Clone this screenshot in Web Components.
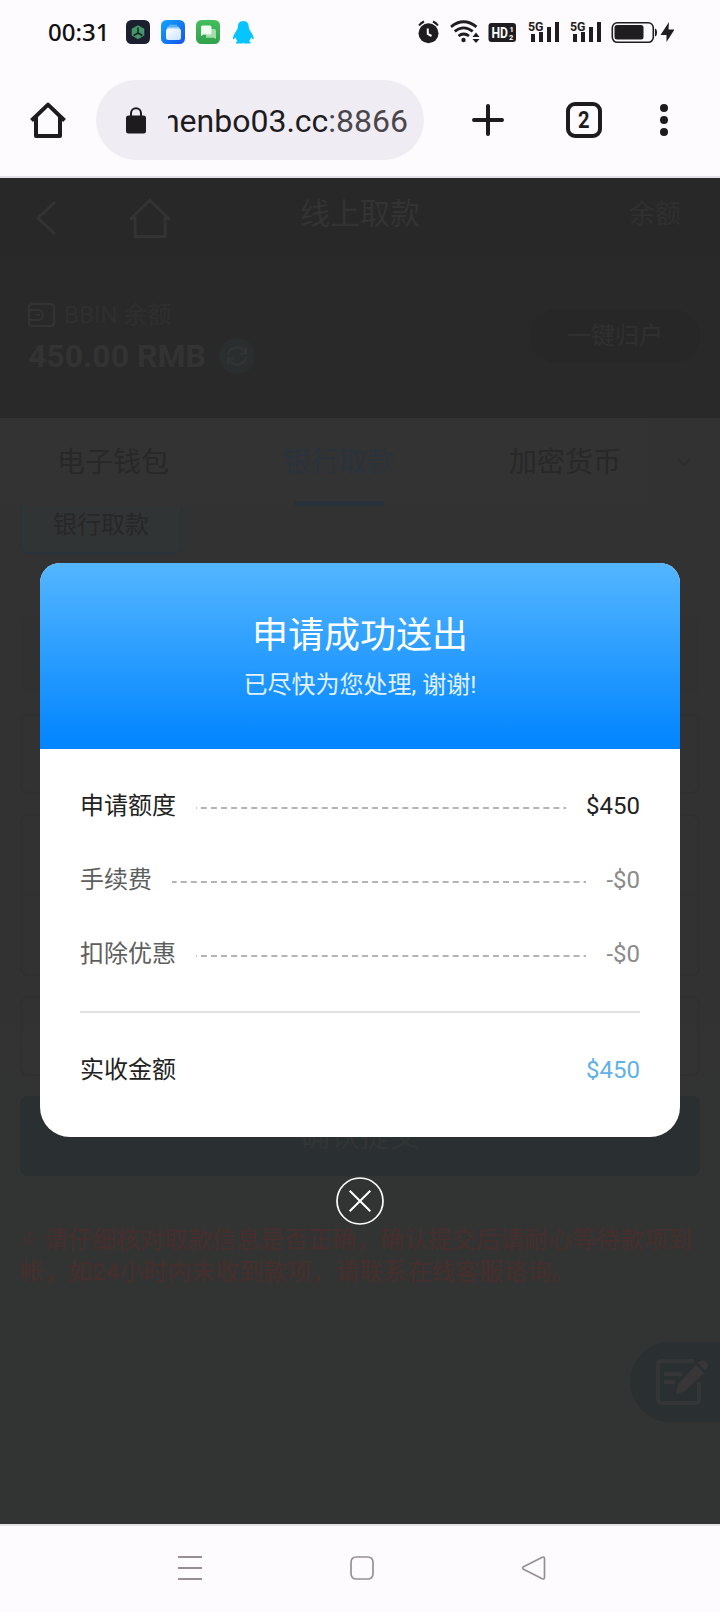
<!DOCTYPE html>
<html lang="zh-CN">
<head>
<meta charset="utf-8">
<meta name="viewport" content="width=device-width">
<title>线上取款</title>
<style>
html,body{margin:0;padding:0}
body{width:720px;height:1612px;overflow:hidden;background:#fefbff;font-family:Roboto,"Noto Sans CJK SC",sans-serif;line-height:1}
</style>
</head>
<body>
<phone-screen></phone-screen>
<script>
function define(name, html) {
  const t = document.createElement('template');
  t.innerHTML = html;
  customElements.define(name, class extends HTMLElement {
    constructor() {
      super();
      this.attachShadow({mode: 'open'}).append(t.content.cloneNode(true));
    }
  });
}

define('status-bar', `
<style>
:host{display:flex;height:64px;align-items:center;box-sizing:border-box;padding:0 46px 0 48px;color:#1f1d20}
.time{font:500 24px/24px "Noto Sans",sans-serif;color:#111;width:78px;white-space:nowrap}
svg{display:block;flex:none}
.apps{display:flex;gap:11px;flex:1}
text{font-family:Roboto,sans-serif;font-weight:700}
</style>
<span class="time">00:31</span>
<div class="apps">
<svg width="24" height="24" viewBox="0 0 24 24"><rect width="24" height="24" rx="5.5" fill="#1c1f30"/><path d="M12 5.2l6.3 3.5v6.8L12 19.2l-6.3-3.7V8.700z" fill="#469566"/><path d="M12 7.500v5.500M12 13l-4.300 2.500M12 13l4.300 2.500" stroke="#14242a" stroke-width="1.500" fill="none"/></svg>
<svg width="24" height="24" viewBox="0 0 24 24"><defs><linearGradient id="b" x1="0" y1="0" x2="1" y2="1"><stop stop-color="#11a4ff"/><stop offset="1" stop-color="#1853ea"/></linearGradient><linearGradient id="w" x1="0" y1="0" x2="1" y2="1"><stop stop-color="#fff"/><stop offset="1" stop-color="#c9e2ff"/></linearGradient></defs><rect width="24" height="24" rx="5.500" fill="url(#b)"/><path d="M8 5.300h8" stroke="#7cc2ff" stroke-width="1"/><rect x="6" y="6.500" width="12.500" height="5" rx="1.500" fill="#8fcbff"/><rect x="5" y="8.500" width="15" height="11.500" rx="2.500" fill="url(#w)"/></svg>
<svg width="24" height="24" viewBox="0 0 24 24"><defs><linearGradient id="g" x1="0" y1="0" x2="0" y2="1"><stop stop-color="#43bf5b"/><stop offset="1" stop-color="#32a04c"/></linearGradient></defs><rect width="24" height="24" rx="5.500" fill="url(#g)"/><path d="M10 9h8.500q1.500 0 1.500 1.500V19l-2-1.200h-8z" fill="#a2dcac"/><path d="M6.500 5.500h7.500q1.500 0 1.500 1.500v6q0 1.500-1.500 1.500H7.500L5 16V7q0-1.500 1.500-1.500z" fill="#f0fbf1"/></svg>
<svg width="24" height="24" viewBox="0 0 24 24"><path d="M12.300 1C8 1 6.800 4 6.800 7.200c0 2.800-3.800 5.800-4.800 10.300-.300 1.700.300 2.400 1.500 1.100l1.100-1.300c.300 1.700.900 2.900 1.900 3.900-1.700.5-1.800 1.200-1.500 2.300h6l1.300-.5 1.300.5h6c.300-1.100.2-1.800-1.500-2.300 1-1 1.600-2.200 1.900-3.900l1.100 1.300c1.200 1.300 1.800.6 1.500-1.100-1-4.500-4.800-7.500-4.800-10.300C17.800 4 16.600 1 12.300 1z" fill="#06c4fd"/></svg>
</div>
<svg width="256" height="26" viewBox="418.500 19 256 26" fill="#1f1d20">
<g><circle cx="429" cy="33.300" r="10"/><path d="M419.500 25.500q2-2.500 5-4M438.500 25.500q-2-2.500-5-4" stroke="#1f1d20" stroke-width="2" fill="none"/><path d="M428.300 28.500v5.500l3.700 2" stroke="#fff" stroke-width="2" fill="none"/></g>
<g fill="none" stroke="#1f1d20" stroke-width="2.800"><path d="M451.500 26.800q12.500-10 25.500 0M455.200 31.400q9-7 18 0M459 36q5.200-4 10.500 0"/></g><circle cx="464" cy="40" r="2.200"/><path d="M473 37l3.500-4.500 3.500 4.500zM473 39h7l-3.500 4z"/>
<rect x="489" y="23" width="27.500" height="19" rx="3"/><g fill="#fff"><text x="492" y="38" font-size="15" textLength="16.500" lengthAdjust="spacingAndGlyphs">HD</text><text x="510" y="31.500" font-size="7.500">1</text><text x="509.500" y="40.300" font-size="7.500">2</text></g>
<g id="s"><text x="528.500" y="30.500" font-size="13" textLength="15.500" lengthAdjust="spacingAndGlyphs">5G</text><path d="M531.500 34h4v8h-4zM539.500 32h4v10h-4zM547.500 27h4v15h-4zM555.500 22h4v20h-4z"/></g>
<use href="#s" x="42"/>
<rect x="612.800" y="22.800" width="41" height="19.500" rx="5" fill="none" stroke="#1f1d20" stroke-width="1.600"/><rect x="615" y="25" width="29" height="14.500" rx="2.500"/><path d="M655.500 28.500q2 .5 2 4t-2 4z"/>
<path d="M669.500 22l-8.500 13h6v7l8-12.500h-6z"/>
</svg>`);

define('browser-bar', `
<style>
:host{display:flex;height:114px;box-sizing:border-box;padding:16px 0 16px 30px;align-items:center;border-bottom:2px solid #e4e0e7;color:#1d1b1e}
svg{display:block;flex:none}
.url{display:flex;align-items:center;width:328px;height:80px;box-sizing:border-box;margin:0 48px 0 30px;padding:0 16px 0 30px;border-radius:40px;background:#f0ecf3}
.addr{flex:1;margin:2px 0 0 22px;overflow:hidden;display:flex;justify-content:flex-end;font-size:32px;line-height:44px;white-space:nowrap}
.port{color:#49464b}
.count{display:flex;align-items:center;justify-content:center;box-sizing:border-box;width:36px;height:36px;margin:0 58px 0 62px;border:4px solid #1d1b1e;border-radius:9px;font:700 24px/28px Roboto,sans-serif}
.count span{transform:scaleX(.84)}
</style>
<svg width="36" height="36" viewBox="0 0 36 36" fill="none" stroke="#1d1b1e" stroke-width="4"><path d="M1.500 18.500L18 2.600l16.500 15.900M6 15v19h24V15" stroke-linejoin="round"/></svg>
<div class="url"><svg width="20" height="27" viewBox="0 0 20 27"><rect y="8.500" width="20" height="18" rx="2.500" fill="#1d1b1e"/><path d="M5 9.500V6.300a5 5 0 0 1 10 0v3.200" fill="none" stroke="#1d1b1e" stroke-width="2"/></svg><div class="addr"><span>henbo03.cc<span class="port">:8866</span></span></div></div>
<svg width="32" height="32" viewBox="0 0 32 32" stroke="#1d1b1e" stroke-width="4" stroke-linecap="round"><path d="M16 2v28M2 16h28"/></svg>
<div class="count"><span>2</span></div>
<svg width="8" height="32" viewBox="0 0 8 32" fill="#1d1b1e"><circle cx="4" cy="4" r="4"/><circle cx="4" cy="16" r="4"/><circle cx="4" cy="28" r="4"/></svg>`);

define('page-header', `
<style>
:host{display:block;background:#292929;color:#333;height:240px}
.bar{display:grid;grid-template-columns:240px 1fr 240px;height:76px;align-items:center;background:#282828}
.left{display:flex;align-items:center;padding:3px 0 0 36px;gap:72px}
.t{text-align:center;font-size:30px;line-height:40px;margin-top:-4px}
.r{text-align:right;padding-right:39px;font-size:26px;line-height:40px;margin-top:-4px;color:#303030}
.bal{display:flex;justify-content:space-between;align-items:center;height:164px;box-sizing:border-box;padding:0 20px 0 28px}
.name{display:flex;gap:9px;align-items:center;font-size:24px;line-height:34px;color:#2f2f2f}
.sum{display:flex;gap:13px;align-items:center;font-size:32px;font-weight:700;line-height:36px;margin-top:6px}
.btn{width:170px;height:52px;border-radius:26px;background:#272727;text-align:center;font-size:24px;line-height:53px;color:#303030}
svg{display:block}
</style>
<div class="bar"><div class="left"><svg width="22" height="36" viewBox="36 199 22 36" fill="none" stroke="#333" stroke-width="3"><path d="M55 201L38 217l17 16"/></svg>
<svg width="40" height="40" viewBox="130 197 40 40" fill="none" stroke="#333" stroke-width="3"><path d="M131 217.500l18.800-18.300 18.800 18.300h-3.500v18h-30v-18z"/></svg></div><div class="t">线上取款</div><div class="r">余额</div></div>
<div class="bal"><div><div class="name"><svg width="27" height="24" viewBox="0 0 27 24" fill="none" stroke="#333" stroke-width="2"><rect x="1" y="1" width="25" height="22" rx="3"/><path d="M1 7h9a5 5 0 0 1 0 10H1M8 12h4"/></svg><span>BBIN 余额</span></div>
<div class="sum"><span>450.00 RMB</span><svg width="36" height="36" viewBox="0 0 36 36"><circle cx="18" cy="18" r="18" fill="#2b2e2e"/><path d="M9 17a9 9 0 0 1 16-4l1.500 2M27 10v5.500h-5.500M27 19a9 9 0 0 1-16 4l-1.500-2M9 26v-5.500h5.500" fill="none" stroke="#333535" stroke-width="2"/></svg></div></div>
<div class="btn">一键归户</div></div>`);

define('method-tabs', `
<style>
:host{display:flex;position:relative;height:88px;background:#333;font-size:28px;color:#282828;overflow:hidden}
.tab{flex:none;width:226px;height:88px;display:flex;flex-direction:column;align-items:center;justify-content:space-between}
.tab span{height:83px;line-height:89px}
.on{color:#2a333d}
i{display:block;width:90px;height:5px;background:#29323a;border-radius:2px 2px 0 0}
.more{position:absolute;right:0;top:0;width:72px;height:88px;background:#323232;display:flex;align-items:center;justify-content:center}
</style>
<div class="tab"><span>电子钱包</span></div><div class="tab on"><span>银行取款</span><i></i></div><div class="tab"><span>加密货币</span></div>
<div class="more"><svg width="16" height="10" viewBox="0 0 16 10" fill="none" stroke="#2c2c2c" stroke-width="2"><path d="M2 2l6 6 6-6"/></svg></div>`);

define('withdraw-form', `
<style>
:host{display:flex;flex-direction:column;padding:0 20px;color:#2a2a2a}
.chip{box-sizing:border-box;width:162px;height:48px;border:2px solid #2a333a;border-top:0;border-radius:0 0 8px 8px;background:#313434;text-align:center;font-size:24px;line-height:39px;margin-bottom:60px;color:#272727}
.box{box-sizing:border-box;height:80px;border:2px solid #303030;border-radius:8px;margin-bottom:20px}
.fill{border-color:#323232;background:#313131}
.two{height:162px}.two:before{content:"";display:block;height:78px;border-bottom:1px solid #303030}
.submit{height:80px;border-radius:8px;background:#2a2f32;text-align:center;font-size:30px;line-height:80px;color:#323535}
.note{margin:48px 0 0;font-size:24px;font-weight:500;line-height:32px;color:#452f2e;white-space:nowrap}
.note div{height:32px;display:flex}
.mark{width:24px;font-size:18px;font-weight:700}
</style>
<div class="chip">银行取款</div>
<div class="box fill"></div><div class="box"></div><div class="box two"></div><div class="box"></div>
<div class="submit">确认提交</div>
<div class="note"><div><span class="mark">※</span><span>请仔细核对取款信息是否正确，确认提交后请耐心等待款项到</span></div><div>帐，如24小时内未收到款项，请联系在线客服谘询。</div></div>`);

define('feedback-button', `
<style>
:host{display:flex;align-items:center;box-sizing:border-box;padding-left:25px;width:90px;height:80px;border-radius:40px 0 0 40px;background:#2a2f32}
</style>
<svg width="54" height="48" viewBox="0 0 54 48"><path d="M39 3H7Q3 3 3 7v34q0 4 4 4h33q4 0 4-4V24" fill="none" stroke="#343536" stroke-width="4"/><path d="M9 16h18M9 24h11" stroke="#343638" stroke-width="4"/><path d="M21 37l2-11L41 7l8 8-19 18z" fill="#383636"/><path d="M43 5l2-2q3-2 6 1t1 6l-2 2z" fill="#383636"/></svg>`);

define('detail-row', `
<style>
:host{display:grid;grid-template:34px / 1fr;align-items:center;height:74px;box-sizing:border-box;padding:20px 0;font-size:24px;line-height:34px}
.line{grid-area:1/1;border-top:2px dashed #b4b4b4;margin-top:3px}
.c{grid-area:1/1;display:flex;justify-content:space-between;z-index:1}
.k,.v{background:#fff}
.k{padding-right:20px;color:var(--k,#5e5e5e)}
.v{padding-left:20px;color:var(--v,#8b8b8b)}
:host([plain]) .line{display:none}
</style>
<div class="line"></div><div class="c"><span class="k"><slot name="label"></slot></span><span class="v"><slot></slot></span></div>`);

define('result-dialog', `
<style>
:host{display:flex;flex-direction:column;align-items:center}
.card{width:640px;height:574px;border-radius:20px 20px 30px 30px;overflow:hidden;background:#fff}
header{height:186px;box-sizing:border-box;padding-top:48px;background:linear-gradient(#54b6ff,#0084ff);text-align:center;color:#fff}
h1{margin:0;font-size:36px;font-weight:400;line-height:50px}
p{margin:7px 0 0;font-size:24px;line-height:34px;color:#e0f2ff}
.rows{padding:20px 40px 0}
hr{margin:20px 0;border:0;border-top:2px solid #e0e0e0}
.strong{--k:#222;--v:#222}
.total{--k:#222;--v:#5fb1e8}
.x{display:block;margin-top:40px}
</style>
<div class="card"><header><h1>申请成功送出</h1><p>已尽快为您处理, 谢谢!</p></header>
<div class="rows">
<detail-row class="strong"><span slot="label">申请额度</span>$450</detail-row>
<detail-row><span slot="label">手续费</span>-$0</detail-row>
<detail-row><span slot="label">扣除优惠</span>-$0</detail-row>
<hr>
<detail-row class="total" plain><span slot="label">实收金额</span>$450</detail-row>
</div></div>
<svg class="x" width="48" height="48" viewBox="0 0 48 48" fill="none" stroke="#fff"><circle cx="24" cy="24" r="23" stroke-width="1.700"/><path d="M13.700 13.700l20.600 20.600M34.300 13.700L13.700 34.300" stroke-width="2"/></svg>`);

define('nav-bar', `
<style>
:host{display:flex;height:86px;align-items:center;justify-content:center;gap:148px;padding:0 0 2px 4px;box-sizing:border-box}
</style>
<svg width="24" height="24" stroke="#978f95" stroke-width="2"><path d="M0 1h24M0 12h24M0 23h24"/></svg>
<svg width="24" height="24" stroke="#978f95" stroke-width="1.700" fill="none"><rect x="1" y="1" width="22" height="22" rx="5"/></svg>
<svg width="24" height="24" stroke="#978f95" stroke-width="1.700" fill="none"><path d="M1.500 10.700L20.300 1.200q2.200-.8 2.200 1.500v18.600q0 2.300-2.200 1.500L1.500 13.300q-1.600-1.300 0-2.600z"/></svg>`);

define('phone-screen', `
<style>
:host{display:flex;flex-direction:column;width:720px;height:1612px}
main{position:relative;height:1346px;overflow:hidden;background:linear-gradient(#323232 60%,#323433 80%);border-bottom:2px solid #e4e2e6}
result-dialog{position:absolute;left:40px;right:40px;top:385px}
feedback-button{position:absolute;right:0;top:1164px}
</style>
<status-bar></status-bar><browser-bar></browser-bar>
<main><page-header></page-header><method-tabs></method-tabs><withdraw-form></withdraw-form><feedback-button></feedback-button><result-dialog></result-dialog></main>
<nav-bar></nav-bar>`);
</script>
</body>
</html>
